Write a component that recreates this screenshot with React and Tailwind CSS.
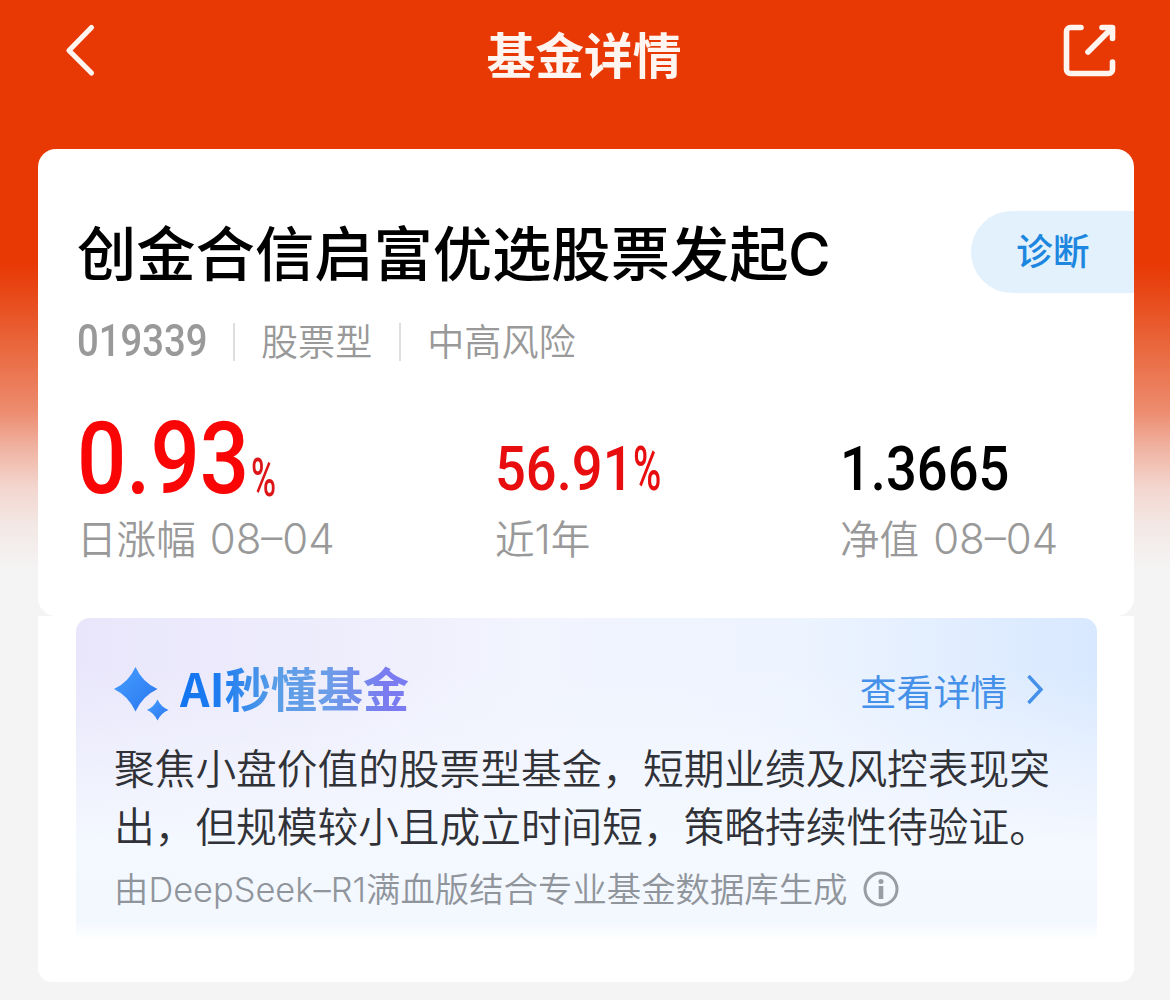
import React from 'react'

function BackIcon() {
  return (
    <svg width="34" height="56" viewBox="0 0 34 56" fill="none" className="text-[#fff5f0]">
      <path
        d="M29.500 5.500L7 28.500L29.500 51"
        stroke="currentColor"
        strokeWidth="5.200"
        strokeLinecap="round"
        strokeLinejoin="round"
      />
    </svg>
  )
}

function ShareIcon() {
  return (
    <svg width="56" height="56" viewBox="0 0 56 56" fill="none" className="text-[#fff5f0]">
      <g stroke="currentColor" strokeWidth="5.6" strokeLinecap="round" strokeLinejoin="round">
        <path d="M20 5.500H9.500a4 4 0 0 0-4 4v38a4 4 0 0 0 4 4h38a4 4 0 0 0 4-4V40" />
        <path d="M41 5.500H51.500V16.500" />
        <path d="M51 6L27 30" />
      </g>
      <path d="M42 5H52V15Z" fill="currentColor" />
    </svg>
  )
}

function SparkleIcon() {
  return (
    <svg width="56" height="56" viewBox="0 0 56 56" className="shrink-0">
      <defs>
        <linearGradient id="sparkle" x1="0" y1="0" x2="1" y2="1">
          <stop offset="0" stopColor="#45a0ff" />
          <stop offset="1" stopColor="#2a74f0" />
        </linearGradient>
      </defs>
      <path
        d="M21.500 1Q28.500 16.500 43.500 23Q28.500 30 21.500 45.500Q14.500 30 0 23Q14.500 16.500 21.500 1Z"
        fill="url(#sparkle)"
      />
      <path
        d="M43.500 33.500Q47 41 54.500 44Q47 47 43.500 54.500Q40 47 33 44Q40 41 43.500 33.500Z"
        fill="url(#sparkle)"
      />
    </svg>
  )
}

function InfoIcon() {
  return (
    <svg width="36" height="36" viewBox="0 0 36 36" fill="none" className="text-[#999ca2]">
      <circle cx="18" cy="18" r="16" stroke="currentColor" strokeWidth="3" />
      <circle cx="18" cy="10.500" r="2.500" fill="currentColor" />
      <path d="M18 15v13" stroke="currentColor" strokeWidth="4.600" />
    </svg>
  )
}

export default function App() {
  const tags = ['股票型', '中高风险']
  const summary = [
    '聚焦小盘价值的股票型基金，短期业绩及风控表现突',
    '出，但规模较小且成立时间短，策略持续性待验证。',
  ]

  return (
    <div className="w-[1170px] h-[1000px] overflow-hidden whitespace-nowrap font-['Noto_Sans_CJK_SC',sans-serif] bg-[linear-gradient(180deg,#e83803_0px,#e83803_262px,#e84c1c_300px,#ea7048_362px,#ed8c70_412px,#f0b3a2_448px,#f3d6cf_488px,#f3e8e5_526px,#f4f4f4_570px)]">
      {/* Nav bar */}
      <header className="h-[149px] pt-[22px] pl-[62px] pr-[53px] flex items-start justify-between">
        <BackIcon />
        <h1 className="pt-px pl-[11px] text-[48.8px] leading-[60px] font-bold text-[#fff5f0]">
          基金详情
        </h1>
        <ShareIcon />
      </header>

      <main className="ml-[38px] w-[1096px]">
        {/* Fund overview */}
        <section className="h-[467px] pt-[62px] pl-[39px] bg-white rounded-[18px]">
          <div className="h-[82px] flex items-start justify-between">
            <h2 className="-mt-px text-[59.3px] leading-[80px] font-medium text-black">
              创金合信启富优选股票发起
              <span className="inline-block -ml-px origin-left scale-x-[0.97] font-['Inter'] text-[60px] leading-[60px] font-medium">
                C
              </span>
            </h2>
            <button className="w-[163px] h-[82px] pb-[6px] pl-[45px] text-left rounded-l-full bg-[#e3f1fc] text-[36.8px] leading-[76px] font-medium text-[#1d87e0]">
              诊断
            </button>
          </div>

          <div className="mt-[30px] h-[38px] flex items-center text-[37.1px] leading-[48px] text-[#999]">
            <span className="w-[131px] font-['Roboto'] text-[43.5px] font-medium">
              <span className="inline-block origin-left scale-x-[0.88]">019339</span>
            </span>
            {tags.map((tag) => (
              <React.Fragment key={tag}>
                <span className="w-[2px] h-[38px] ml-[25px] mr-[26px] bg-[#dedede]" />
                <span className="-mt-[4px] mr-[2px] font-[350]">{tag}</span>
              </React.Fragment>
            ))}
          </div>

          <div className="mt-[48px] flex items-end">
            <div className="w-[418px]">
              <div className="h-[100px] flex items-baseline font-['Roboto'] text-[#fa0505]">
                <span className="w-[174px] text-[101px] leading-[100px] font-medium">
                  <span className="inline-block origin-left scale-x-[0.86]">0.93</span>
                </span>
                <span className="relative top-[3px] text-[54px] leading-[40px] font-medium text-[#dc1518]">
                  <span className="inline-block origin-left scale-x-[0.63]">%</span>
                </span>
              </div>
              <p className="text-[39.6px] leading-[56px] font-[350] text-[#999]">
                日涨幅<span className="ml-[14px] font-['Inter'] text-[42px] font-light">08–04</span>
              </p>
            </div>
            <div className="w-[345px]">
              <p className="font-['Roboto'] text-[61px] leading-[80px] font-medium text-[#e80d0f]">
                <span className="inline-block w-[138px] origin-left scale-x-[0.89]">56.91</span>
                <span className="inline-block origin-left scale-x-[0.63]">%</span>
              </p>
              <p className="text-[39.6px] leading-[56px] font-[350] text-[#999]">
                近<span className="font-['Inter'] text-[41px] font-light">1</span>年
              </p>
            </div>
            <div>
              <p className="font-['Roboto'] text-[61px] leading-[80px] font-medium text-black">
                <span className="inline-block origin-left scale-x-[0.89]">1.3665</span>
              </p>
              <p className="text-[39.6px] leading-[56px] font-[350] text-[#999]">
                净值<span className="ml-[14px] font-['Inter'] text-[42px] font-light">08–04</span>
              </p>
            </div>
          </div>
        </section>

        {/* AI summary */}
        <section className="h-[366px] pt-[2px] px-[38px] bg-white rounded-b-[14px]">
          <div className="h-[323px] w-[1021px] rounded-t-[14px] bg-[linear-gradient(180deg,#f4f8ff00_0%,#f4f8ff00_15%,#f4f8ff_70%,#f3f8ff_94%,#ffffff_100%),linear-gradient(90deg,#e9e6fb_0%,#eeedfc_25%,#f2f4fe_45%,#edf4ff_70%,#d8e8ff_100%)]">
            <div className="pt-[48px] pl-[38px] pr-[53px] flex items-start justify-between">
              <div className="flex items-start">
                <SparkleIcon />
                <h3 className="-mt-[7px] ml-[10px] text-[46.1px] leading-[56px] font-bold bg-[linear-gradient(90deg,#1274f0_0%,#1e7df0_18%,#5a9ee6_42%,#6c9de8_65%,#7a7bf0_90%)] bg-clip-text text-transparent">
                  AI秒懂基金
                </h3>
              </div>
              <a className="flex items-center text-[36.8px] leading-[48px] text-[#4590e8]">
                查看详情
                <svg width="18" height="32" viewBox="0 0 18 32" fill="none" className="ml-[19px] mb-[3px]">
                  <path d="M2.500 3L15 16.500L2.500 30" stroke="currentColor" strokeWidth="3.400" />
                </svg>
              </a>
            </div>
            <div className="mt-[16px] pl-[38px] text-[40.7px] leading-[57.5px] font-[350] text-[#303238]">
              {summary.map((line) => (
                <p key={line}>{line}</p>
              ))}
            </div>
            <div className="mt-[10px] pl-[38px] flex items-center text-[34.4px] leading-[48px] font-[350] text-[#90959c]">
              <span>
                由<span className="font-['Inter'] font-light">DeepSeek–R1</span>满血版结合专业基金数据库生成
              </span>
              <span className="ml-[15px]">
                <InfoIcon />
              </span>
            </div>
          </div>
        </section>
      </main>
    </div>
  )
}
